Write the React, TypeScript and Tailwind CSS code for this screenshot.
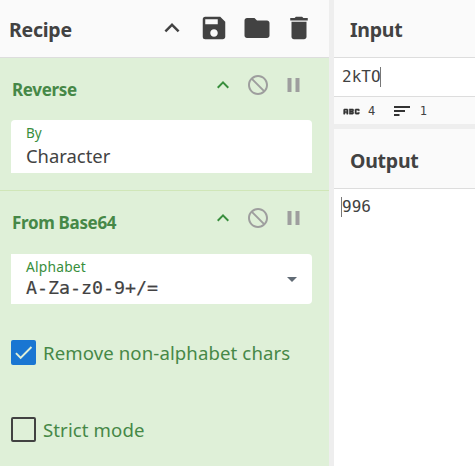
import React from "react";
import {
  MdKeyboardArrowUp,
  MdSave,
  MdFolder,
  MdDelete,
  MdNotInterested,
  MdPause,
  MdAbc,
  MdArrowDropDown,
  MdCheck,
} from "react-icons/md";

function Title({ children }: { children: React.ReactNode }) {
  return <h2 className="text-[19.5px] leading-[26px] font-bold tracking-[-0.25px] text-[#424242]">{children}</h2>;
}

function OperationHeader({ name }: { name: string }) {
  return (
    <div className="flex h-[30px] items-center justify-between pr-[12px] pl-px">
      <h3 className="pt-px text-[17px] font-bold tracking-[-0.33px] whitespace-nowrap text-[#468847]">{name}</h3>
      <div className="flex h-[30px] items-center gap-[11px] pb-[9px] text-[#9e9e9e]">
        <MdKeyboardArrowUp size={24} className="text-[#388e3c]" />
        <MdNotInterested size={24} />
        <MdPause size={24} className="w-[25px]" />
      </div>
    </div>
  );
}

function Option({ label, checked }: { label: string; checked: boolean }) {
  return (
    <label className="flex h-[25px] items-center gap-[7px] text-[18.6px] whitespace-nowrap text-[#468847]">
      <span
        className={
          checked
            ? "flex size-[25px] shrink-0 items-center justify-center rounded-[2px] bg-[#1976d2] text-[#dff0d8]"
            : "size-[25px] shrink-0 rounded-[2px] border-2 border-[#424242]"
        }
      >
        {checked && <MdCheck size={23} />}
      </span>
      <span className="tracking-[0.1px]">{label}</span>
    </label>
  );
}

export default function App() {
  return (
    <main className="flex h-[466px] w-[475px] overflow-hidden bg-[#eeeeee] font-['Noto_Sans','Open_Sans',sans-serif] text-[#424242]">
      <section className="flex w-[329px] shrink-0 flex-col bg-[#dff0d8]">
        <header className="flex h-[58px] items-center justify-between border-b border-[#dddddd] bg-[#fafafa] pr-[15px] pl-[9px]">
          <div className="pt-[3px]"><Title>Recipe</Title></div>
          <div className="flex items-center gap-[12.3px] pb-px">
            <MdKeyboardArrowUp size={30} />
            <MdSave size={30} />
            <MdFolder size={30} />
            <MdDelete size={30} />
          </div>
        </header>
        <article className="h-[133px] border-b border-[#d0e6b8] px-[11px] pt-[16px]">
          <OperationHeader name="Reverse" />
          <div className="mt-[16px] h-[53px] w-[301px] rounded-t-[4px] bg-white px-[15px] pt-[4px]">
            <div className="text-[13.5px] leading-[18px] text-[#388e3c]">By</div>
            <div className="pt-[2px] text-[18.4px] leading-[24px]">Character</div>
          </div>
        </article>
        <article className="flex-1 px-[11px] pt-[16px]">
          <OperationHeader name="From Base64" />
          <div className="mt-[17px] flex h-[50px] w-[301px] items-center justify-between rounded-r-[4px] bg-white pr-[8px] pl-[15px]">
            <div>
              <div className="text-[13.8px] leading-[18px] tracking-[0.2px] text-[#388e3c]">Alphabet</div>
              <div className="font-['DejaVu_Sans_Mono',monospace] text-[18.3px] leading-[24px] [-webkit-text-stroke:0.2px_#424242]">A-Za-z0-9+/=</div>
            </div>
            <MdArrowDropDown size={24} className="text-[#616b75]" />
          </div>
          <div className="mt-[36px] flex flex-col gap-[52px]">
            <Option label="Remove non-alphabet chars" checked />
            <Option label="Strict mode" checked={false} />
          </div>
        </article>
      </section>
      <div className="ml-[5px] flex flex-1 flex-col">
        <section className="flex h-[124px] flex-col bg-[#fafafa]">
          <header className="flex h-[58px] items-center border-b border-[#dddddd] pt-[3px] pl-[16px]">
            <Title>Input</Title>
          </header>
          <div className="flex h-[39px] items-center border-b border-[#dddddd] bg-white pb-px pl-[8px] font-['DejaVu_Sans_Mono',monospace] text-[16px]">
            <span>2kTO</span>
            <span className="-ml-px h-[20px] w-px bg-[#777777]" />
          </div>
          <footer className="flex flex-1 items-center pt-px pl-[7px] font-['DejaVu_Sans_Mono',monospace] text-[12px]">
            <MdAbc
              size={21}
              stroke="currentColor"
              strokeWidth={0.5}
              className="shrink-0 text-[#333333] [&>path:first-child]:stroke-none"
            />
            <span className="ml-[6px]">4</span>
            <svg width="16" height="10" viewBox="0 0 16 10" fill="#333333" className="ml-[19px] shrink-0">
              <path d="M0 0h16v2H0zM0 4h11v2H0zM0 8h5.5v2H0z" />
            </svg>
            <span className="ml-[9.5px]">1</span>
          </footer>
        </section>
        <section className="mt-[5px] flex flex-1 flex-col bg-white">
          <header className="flex h-[60px] items-center border-b border-[#dddddd] bg-[#fafafa] pt-[5px] pl-[16px]">
            <Title>Output</Title>
          </header>
          <div className="flex h-[35px] items-center pl-[7px] font-['DejaVu_Sans_Mono',monospace] text-[16px]">
            <span className="h-[20px] w-px bg-[#777777]" />
            <span>996</span>
          </div>
        </section>
      </div>
    </main>
  );
}
